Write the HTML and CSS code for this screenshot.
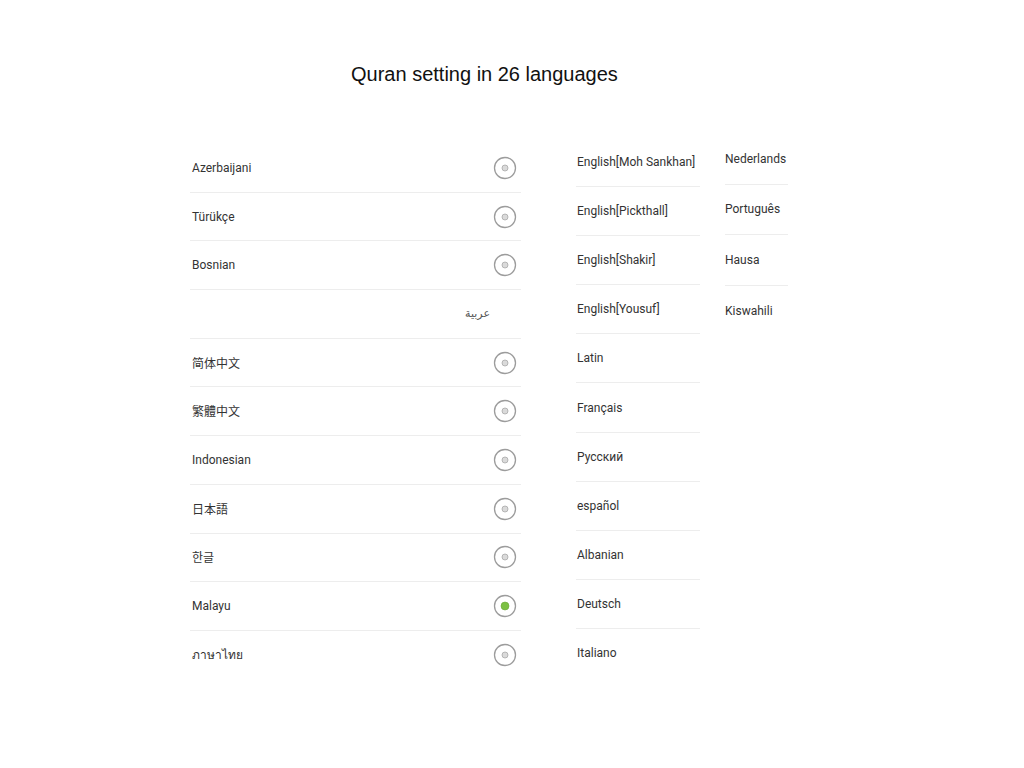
FILE: index.html
```html
<!DOCTYPE html>
<html lang="en">
<head>
<meta charset="utf-8">
<title>Quran setting in 26 languages</title>
<link rel="stylesheet" href="styles.css">
</head>
<body>
<div class="page">
  <h1 class="title">Quran setting in 26 languages</h1>
  <div class="columns">
    <ul class="list list-main">
      <li class="row"><span class="label">Azerbaijani</span><svg class="radio" viewBox="0 0 24 24"><circle class="ring" cx="12" cy="12" r="10.5"/><circle class="dot" cx="12" cy="12" r="3"/></svg></li>
      <li class="row"><span class="label">Türükçe</span><svg class="radio" viewBox="0 0 24 24"><circle class="ring" cx="12" cy="12" r="10.5"/><circle class="dot" cx="12" cy="12" r="3"/></svg></li>
      <li class="row"><span class="label">Bosnian</span><svg class="radio" viewBox="0 0 24 24"><circle class="ring" cx="12" cy="12" r="10.5"/><circle class="dot" cx="12" cy="12" r="3"/></svg></li>
      <li class="row row-rtl"><span class="label arabic" lang="ar" dir="rtl">عربية</span></li>
      <li class="row"><span class="label cjk" lang="zh-Hans">简体中文</span><svg class="radio" viewBox="0 0 24 24"><circle class="ring" cx="12" cy="12" r="10.5"/><circle class="dot" cx="12" cy="12" r="3"/></svg></li>
      <li class="row"><span class="label cjk-tc" lang="zh-Hant">繁體中文</span><svg class="radio" viewBox="0 0 24 24"><circle class="ring" cx="12" cy="12" r="10.5"/><circle class="dot" cx="12" cy="12" r="3"/></svg></li>
      <li class="row"><span class="label">Indonesian</span><svg class="radio" viewBox="0 0 24 24"><circle class="ring" cx="12" cy="12" r="10.5"/><circle class="dot" cx="12" cy="12" r="3"/></svg></li>
      <li class="row"><span class="label cjk-jp" lang="ja">日本語</span><svg class="radio" viewBox="0 0 24 24"><circle class="ring" cx="12" cy="12" r="10.5"/><circle class="dot" cx="12" cy="12" r="3"/></svg></li>
      <li class="row"><span class="label cjk-kr" lang="ko">한글</span><svg class="radio" viewBox="0 0 24 24"><circle class="ring" cx="12" cy="12" r="10.5"/><circle class="dot" cx="12" cy="12" r="3"/></svg></li>
      <li class="row"><span class="label">Malayu</span><svg class="radio" viewBox="0 0 24 24"><circle class="ring" cx="12" cy="12" r="10.5"/><circle class="dot-on" cx="12" cy="12" r="4"/></svg></li>
      <li class="row"><span class="label thai" lang="th">ภาษาไทย</span><svg class="radio" viewBox="0 0 24 24"><circle class="ring" cx="12" cy="12" r="10.5"/><circle class="dot" cx="12" cy="12" r="3"/></svg></li>
    </ul>
    <ul class="list list-mid">
      <li class="row"><span class="label">English[Moh Sankhan]</span></li>
      <li class="row"><span class="label">English[Pickthall]</span></li>
      <li class="row"><span class="label">English[Shakir]</span></li>
      <li class="row"><span class="label">English[Yousuf]</span></li>
      <li class="row"><span class="label">Latin</span></li>
      <li class="row"><span class="label">Français</span></li>
      <li class="row"><span class="label">Русский</span></li>
      <li class="row"><span class="label">español</span></li>
      <li class="row"><span class="label">Albanian</span></li>
      <li class="row"><span class="label">Deutsch</span></li>
      <li class="row"><span class="label">Italiano</span></li>
    </ul>
    <ul class="list list-right">
      <li class="row"><span class="label">Nederlands</span></li>
      <li class="row"><span class="label">Português</span></li>
      <li class="row"><span class="label">Hausa</span></li>
      <li class="row"><span class="label">Kiswahili</span></li>
    </ul>
  </div>
</div>
</body>
</html>
```

FILE: styles.css
```css
* { box-sizing: border-box; }
html, body { margin: 0; padding: 0; background: #ffffff; }
body { font-family: Roboto, "Noto Sans", "DejaVu Sans", sans-serif; color: #333333; }

.page { padding-top: 61px; }

.title {
  margin: 0 0 0 351px;
  font-family: "Liberation Sans", Arial, sans-serif;
  font-weight: normal;
  font-size: 20px;
  line-height: 26px;
  color: #111;
}

.columns {
  display: flex;
  align-items: flex-start;
  margin-left: 190px;
  margin-top: 57px;
}

.list { list-style: none; margin: 0; padding: 0; }

.row {
  display: flex;
  align-items: center;
  justify-content: space-between;
  border-bottom: 1px solid #ededed;
}
.row:last-child { border-bottom: none; }

.label { font-size: 12px; line-height: 16px; white-space: nowrap; }

.list-main { width: 331px; }
.list-main .row { height: 48.7px; padding: 0 4px 0 2px; }
.list-main .row-rtl { justify-content: flex-end; padding-right: 31px; }

.list-mid { width: 124px; margin-left: 55px; margin-top: -6px; }
.list-mid .row { height: 49.1px; padding-left: 1px; }

.list-right { width: 63px; margin-left: 25px; margin-top: -10px; }
.list-right .row { height: 50.6px; }

.radio { width: 24px; height: 24px; flex: none; }
.ring { fill: #fff; stroke: #9c9c9c; stroke-width: 1.3; }
.dot { fill: #dadada; stroke: #a8a8a8; stroke-width: 0.8; }
.dot-on { fill: #7cc043; stroke: #6aa838; stroke-width: 0.6; }

.arabic { font-family: "DejaVu Sans", "Noto Sans", sans-serif; font-size: 11px; color: #555; }
.cjk { font-family: "Noto Sans CJK SC", sans-serif; }
.cjk-tc { font-family: "Noto Sans CJK TC", sans-serif; }
.cjk-jp { font-family: "Noto Sans CJK JP", sans-serif; }
.cjk-kr { font-family: "Noto Sans CJK KR", sans-serif; }
.thai { font-family: "Noto Sans", "DejaVu Sans", sans-serif; }
```
